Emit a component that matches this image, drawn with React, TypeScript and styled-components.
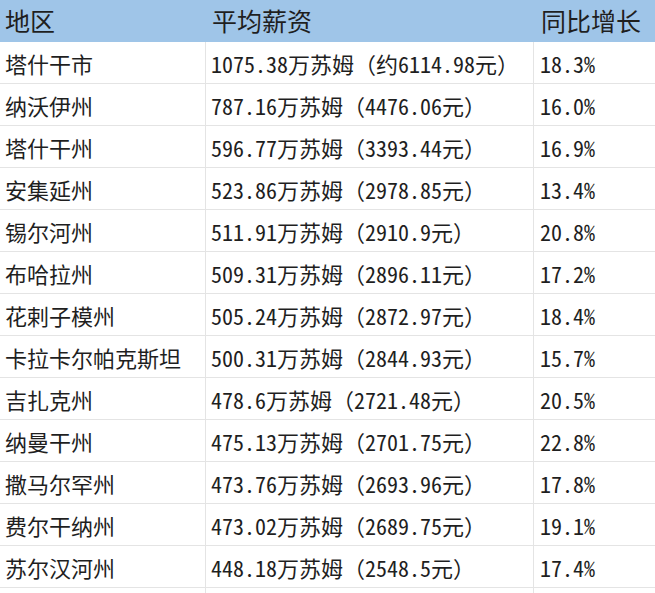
import React from "react";
import styled, { createGlobalStyle } from "styled-components";

const Global = createGlobalStyle`
  html, body { margin: 0; padding: 0; background: #ffffff; }
  body { overflow: hidden; }
`;

const Table = styled.div`
  width: 655px;
  display: flex;
  flex-direction: column;
  color: #1f1f1f;
`;

const Row = styled.div<{ $head?: boolean; $tail?: boolean }>`
  display: grid;
  grid-template-columns: 206px 328px 1fr;
  height: ${(p) => (p.$tail ? 5 : 42)}px;
  box-sizing: border-box;
  background: ${(p) => (p.$head ? "#9fc5e8" : "#ffffff")};
  border-bottom: ${(p) =>
    p.$tail ? "none" : `1px solid ${p.$head ? "#9fc5e8" : "#e4e4e4"}`};
`;

const Cell = styled.div<{ $head?: boolean; $last?: boolean; $pad?: number }>`
  display: flex;
  align-items: center;
  box-sizing: border-box;
  padding-left: ${(p) => p.$pad ?? 5}px;
  border-right: ${(p) => (p.$last || p.$head ? "none" : "1px solid #e4e4e4")};
  font-family: ${(p) =>
    p.$head
      ? '"Noto Sans CJK SC", "Noto Sans", sans-serif'
      : '"Noto Sans Mono CJK SC", "Noto Sans CJK SC", monospace'};
  font-size: ${(p) => (p.$head ? 25 : 22)}px;
  font-weight: 400;
  white-space: nowrap;
  line-height: 1;
`;

const rows: [string, string, string][] = [
  ["塔什干市", "1075.38万苏姆（约6114.98元）", "18.3%"],
  ["纳沃伊州", "787.16万苏姆（4476.06元）", "16.0%"],
  ["塔什干州", "596.77万苏姆（3393.44元）", "16.9%"],
  ["安集延州", "523.86万苏姆（2978.85元）", "13.4%"],
  ["锡尔河州", "511.91万苏姆（2910.9元）", "20.8%"],
  ["布哈拉州", "509.31万苏姆（2896.11元）", "17.2%"],
  ["花剌子模州", "505.24万苏姆（2872.97元）", "18.4%"],
  ["卡拉卡尔帕克斯坦", "500.31万苏姆（2844.93元）", "15.7%"],
  ["吉扎克州", "478.6万苏姆（2721.48元）", "20.5%"],
  ["纳曼干州", "475.13万苏姆（2701.75元）", "22.8%"],
  ["撒马尔罕州", "473.76万苏姆（2693.96元）", "17.8%"],
  ["费尔干纳州", "473.02万苏姆（2689.75元）", "19.1%"],
  ["苏尔汉河州", "448.18万苏姆（2548.5元）", "17.4%"],
];

export default function App() {
  return (
    <>
      <Global />
      <Table>
        <Row $head>
          <Cell $head>地区</Cell>
          <Cell $head $pad={6}>平均薪资</Cell>
          <Cell $head $pad={7}>同比增长</Cell>
        </Row>
        {rows.map(([a, b, c]) => (
          <Row key={a}>
            <Cell>{a}</Cell>
            <Cell $pad={5}>{b}</Cell>
            <Cell $pad={6} $last>{c}</Cell>
          </Row>
        ))}
        <Row $tail>
          <Cell />
          <Cell />
          <Cell $last />
        </Row>
      </Table>
    </>
  );
}
